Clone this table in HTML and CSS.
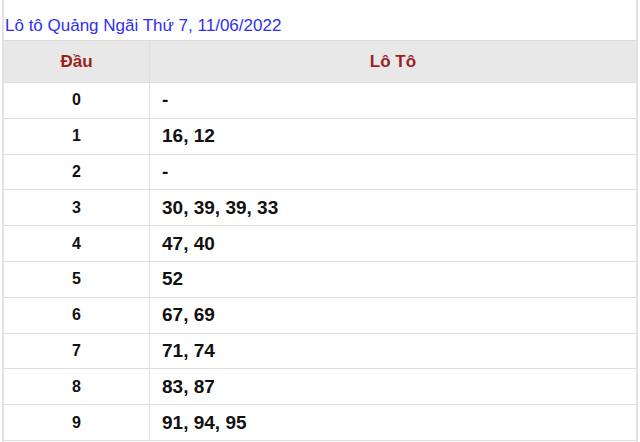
FILE: index.html
```html
<!DOCTYPE html>
<html lang="vi">
<head>
<meta charset="utf-8">
<title>Lô tô Quảng Ngãi</title>
<link rel="stylesheet" href="styles.css">
</head>
<body>
<div class="wrap">
  <h2 class="title">Lô tô Quảng Ngãi Thứ 7, 11/06/2022</h2>
  <div class="table">
    <div class="row head"><div class="c1">Đầu</div><div class="c2">Lô Tô</div></div>
    <div class="row"><div class="c1">0</div><div class="c2 v">-</div></div>
    <div class="row"><div class="c1">1</div><div class="c2 v">16, 12</div></div>
    <div class="row"><div class="c1">2</div><div class="c2 v">-</div></div>
    <div class="row"><div class="c1">3</div><div class="c2 v">30, 39, 39, 33</div></div>
    <div class="row"><div class="c1">4</div><div class="c2 v">47, 40</div></div>
    <div class="row"><div class="c1">5</div><div class="c2 v">52</div></div>
    <div class="row"><div class="c1">6</div><div class="c2 v">67, 69</div></div>
    <div class="row"><div class="c1">7</div><div class="c2 v">71, 74</div></div>
    <div class="row"><div class="c1">8</div><div class="c2 v">83, 87</div></div>
    <div class="row"><div class="c1">9</div><div class="c2 v">91, 94, 95</div></div>
  </div>
</div>
</body>
</html>
```
FILE: styles.css
```css
html, body {
  margin: 0;
  padding: 0;
  background: #fff;
  font-family: "Liberation Sans", Arial, sans-serif;
}
.wrap {
  margin-left: 2px;
  width: 632px;
  border-left: 2px solid #e2e2e2;
  border-right: 2px solid #e2e2e2;
  min-height: 442px;
}
.title {
  margin: 0;
  height: 40px;
  box-sizing: border-box;
  padding: 16px 0 0 1px;
  font-size: 17px;
  font-weight: normal;
  line-height: 20px;
  color: #2f2ff2;
}
.table {
  display: grid;
  grid-template-rows: 43px repeat(10, 35.8px);
}
.row {
  display: grid;
  grid-template-columns: 146px 1fr;
  border-bottom: 1px solid #dedede;
  box-sizing: border-box;
}
.row.head {
  background: #e8e8e8;
  border-top: 1px solid #dcdcdc;
}
.c1, .c2 {
  display: flex;
  align-items: center;
}
.c1 {
  justify-content: center;
  border-right: 1px solid #dedede;
  font-size: 16px;
  font-weight: bold;
  color: #111;
}
.c2 {
  padding-left: 12px;
}
.head .c1, .head .c2 {
  font-size: 17px;
  font-weight: bold;
  color: #9c1f1f;
  justify-content: center;
  padding-left: 0;
}
.v {
  font-size: 19px;
  font-weight: bold;
  color: #111;
}
```
